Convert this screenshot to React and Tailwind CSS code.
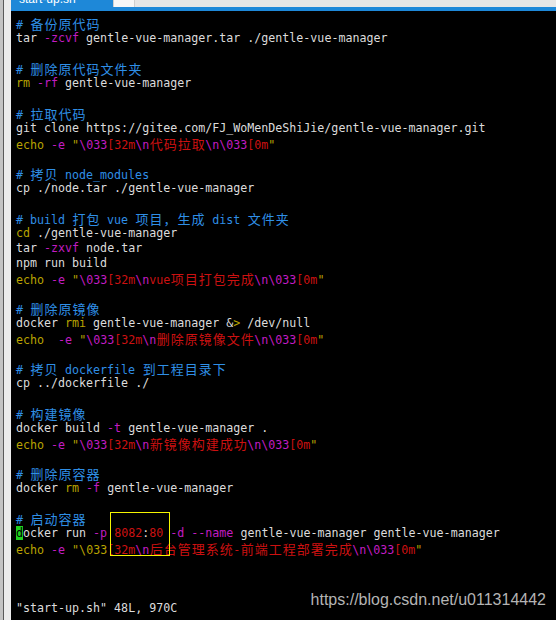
import React from "react";

// syntax colours as vim draws them in this terminal
const W = "text-[#dcdcdc]";
const C = "text-[#2f8fe6]";
const M = "text-[#c21cc2]";
const R = "text-[#cc1111]";
const Y = "text-[#b9a300]";

const echo = (msg, quote = [[Y, '"'], [M, "\\033"]], gap = " ") => [
  [Y, "echo"],
  [W, gap],
  [M, "-e"],
  [W, " "],
  ...quote,
  [R, "[32m"],
  [M, "\\n"],
  [R, msg],
  [M, "\\n\\033"],
  [R, "[0m"],
  [Y, '"'],
];

const LINES = [
  [[C, "# 备份原代码"]],
  [[W, "tar "], [M, "-zcvf"], [W, " gentle-vue-manager.tar ./gentle-vue-manager"]],
  [],
  [[C, "# 删除原代码文件夹"]],
  [[Y, "rm"], [W, " "], [M, "-rf"], [W, " gentle-vue-manager"]],
  [],
  [[C, "# 拉取代码"]],
  [[W, "git clone https://gitee.com/FJ_WoMenDeShiJie/gentle-vue-manager.git"]],
  echo("代码拉取"),
  [],
  [[C, "# 拷贝 node_modules"]],
  [[W, "cp ./node.tar ./gentle-vue-manager"]],
  [],
  [[C, "# build 打包 vue 项目，生成 dist 文件夹"]],
  [[Y, "cd"], [W, " ./gentle-vue-manager"]],
  [[W, "tar "], [M, "-zxvf"], [W, " node.tar"]],
  [[W, "npm run build"]],
  echo("vue项目打包完成"),
  [],
  [[C, "# 删除原镜像"]],
  [[W, "docker "], [Y, "rmi"], [W, " gentle-vue-manager &"], [Y, ">"], [W, " /dev/null"]],
  echo("删除原镜像文件", undefined, "  "),
  [],
  [[C, "# 拷贝 dockerfile 到工程目录下"]],
  [[W, "cp ../dockerfile ./"]],
  [],
  [[C, "# 构建镜像"]],
  [[W, "docker build "], [M, "-t"], [W, " gentle-vue-manager ."]],
  echo("新镜像构建成功"),
  [],
  [[C, "# 删除原容器"]],
  [[W, "docker "], [Y, "rm"], [W, " "], [M, "-f"], [W, " gentle-vue-manager"]],
  [],
  [[C, "# 启动容器"]],
  [
    ["cursor", "d"],
    [W, "ocker run "],
    [M, "-p"],
    [W, " "],
    [R, "8082"],
    [W, ":"],
    [R, "80"],
    [W, " "],
    [M, "-d"],
    [W, " "],
    [M, "--name"],
    [W, " gentle-vue-manager gentle-vue-manager"],
  ],
  echo("后台管理系统-前端工程部署完成", [[Y, '"\\033']]),
  [],
  [],
  [],
  [[W, '"start-up.sh" 48L, 970C']],
];

// CJK glyphs take two terminal cells (14px)
function Seg({ cls, text }) {
  const parts = [];
  let buf = "";
  for (const ch of text) {
    if (ch.charCodeAt(0) > 0x2e7f) {
      if (buf) parts.push(buf);
      buf = "";
      parts.push(
        <span
          key={parts.length}
          className="inline-block w-[14px] text-center font-['Noto_Sans_CJK_SC',sans-serif] text-[13px]"
        >
          {ch}
        </span>
      );
    } else buf += ch;
  }
  if (buf) parts.push(buf);

  if (cls === "cursor") {
    return <span className="bg-[#1fd21f] text-black">{parts}</span>;
  }
  return <span className={cls}>{parts}</span>;
}

export default function App() {
  return (
    <div className="relative flex w-[556px] h-[620px] overflow-hidden bg-black">
      {/* window edge */}
      <div className="flex h-full w-[11px] shrink-0">
        <div className="w-[3px] bg-[#c4c4c4]" />
        <div className="w-px bg-[#5a5a5a]" />
        <div className="flex-1 bg-[#ececec]" />
      </div>

      <div className="flex flex-1 flex-col">
        {/* tab strip, cut off at the top of the shot */}
        <div className="flex h-[7px] bg-[#e6e6e6]">
          <div className="w-[102px] overflow-hidden bg-[#1e88d8] pl-[8px]">
            <div className="-mt-[7px] text-[12px] leading-[12px] text-white font-['Liberation_Sans',sans-serif]">
              start-up.sh
            </div>
          </div>
          <div className="w-[22px] border-x border-[#cfcfcf] bg-[#f7f7f7]" />
        </div>
        <div className="h-[4px] bg-[#1e88d8]" />

        {/* buffer */}
        <div className="pt-[5px] pl-[5px] font-['DejaVu_Sans_Mono',monospace] text-[11.65px]">
          {LINES.map((line, i) => (
            <div key={i} className="h-[15px] leading-[15px] whitespace-pre">
              {line.map(([cls, text], j) => (
                <Seg key={j} cls={cls} text={text} />
              ))}
            </div>
          ))}
        </div>
      </div>

      {/* annotation box */}
      <div className="absolute left-[110px] top-[512px] w-[60px] h-[44px] border border-[#f5f500]" />

      {/* watermark */}
      <div className="absolute right-[10px] top-[590px] text-[16px] leading-[20px] text-[#b4b4b4] font-['Liberation_Sans',sans-serif]">
        https://blog.csdn.net/u011314442
      </div>
    </div>
  );
}
